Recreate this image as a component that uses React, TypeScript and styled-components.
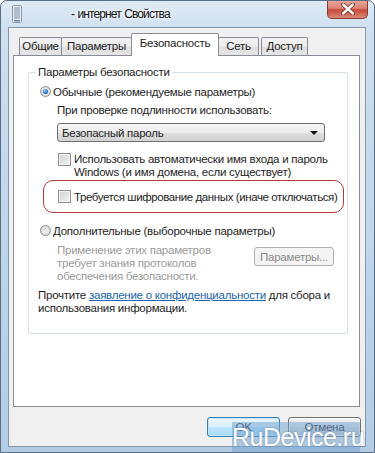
import React from 'react';
import styled, { createGlobalStyle } from 'styled-components';

const GlobalStyle = createGlobalStyle`
  html, body {
    margin: 0;
    padding: 0;
    background: #ffffff;
  }
  body {
    font-family: "Liberation Sans", Arial, sans-serif;
    font-size: 11.5px;
    letter-spacing: -0.25px;
    color: #1e1e1e;
  }
`;

// outer aero frame
const Window = styled.div`
  position: relative;
  width: 375px;
  height: 453px;
  box-sizing: border-box;
  display: flex;
  flex-direction: column;
  border: 1px solid #5b6f84;
  border-radius: 7px 7px 0 0;
  overflow: hidden;
  background: linear-gradient(180deg, #dfebf6 0%, #cfe0f0 26px, #bed5ea 55%, #b3cde5 100%);
`;

const TitleBar = styled.div`
  height: 26px;
  display: flex;
  align-items: center;
  padding: 0 6px 0 11px;
  flex-shrink: 0;
`;

const Title = styled.div`
  margin-left: 49px;
  font-size: 12px;
  letter-spacing: -0.9px;
  word-spacing: 1px;
  color: #111;
  text-shadow: 0 0 6px #ffffff, 0 0 3px #ffffff;
`;

const CloseButton = styled.div`
  margin-left: auto;
  align-self: flex-start;
  margin-top: -1px;
  width: 41px;
  height: 19px;
  box-sizing: border-box;
  border: 1px solid #8c3b31;
  border-top: none;
  border-radius: 0 0 5px 5px;
  background: linear-gradient(180deg, #e9aaa0 0%, #dc8576 45%, #c64a38 55%, #d98b78 100%);
  display: flex;
  align-items: center;
  justify-content: center;
`;

const Client = styled.div`
  flex: 1;
  margin: 0 8px 5px 7px;
  padding: 5px 5px 0 4px;
  background: #f0f0f0;
  border: 1px solid #8497aa;
  display: flex;
  flex-direction: column;
`;

const TabRow = styled.div`
  position: relative;
  z-index: 1;
  height: 23px;
  margin: 0 0 -1px 6px;
  display: flex;
  align-items: flex-end;
`;

const Tab = styled.div<{ $active?: boolean; $w: number; $gap?: number }>`
  width: ${(p) => p.$w}px;
  margin-left: ${(p) => p.$gap ?? 0}px;
  box-sizing: border-box;
  height: ${(p) => (p.$active ? 23 : 18)}px;
  margin-bottom: ${(p) => (p.$active ? 0 : 1)}px;
  border: 1px solid #898c95;
  border-bottom: none;
  border-radius: 2px 2px 0 0;
  background: ${(p) => (p.$active ? '#ffffff' : 'linear-gradient(180deg, #f3f3f3 0%, #ebebeb 50%, #dedede 51%, #e6e6e6 100%)')};
  display: flex;
  align-items: ${(p) => (p.$active ? 'flex-start' : 'center')};
  padding-top: ${(p) => (p.$active ? 2 : 0)}px;
  justify-content: center;
  line-height: 15px;
  white-space: nowrap;
`;

const Panel = styled.div`
  height: 352px;
  box-sizing: border-box;
  background: #ffffff;
  border: 1px solid #898c95;
  padding: 9px 11px 0 14px;
`;

const GroupBox = styled.fieldset`
  margin: 0;
  min-width: 0;
  border: 1px solid #d5dfe5;
  border-radius: 3px;
  padding: 4px 10px 18px 11px;
`;

const Legend = styled.legend`
  padding: 0 2px;
  margin-left: -4px;
  line-height: 15px;
`;

const OptionRow = styled.div<{ $top?: number }>`
  display: flex;
  align-items: center;
  height: 15px;
  margin-top: ${(p) => p.$top ?? 0}px;
  white-space: nowrap;
`;

const Radio = styled.span<{ $checked?: boolean }>`
  width: 11px;
  height: 11px;
  box-sizing: border-box;
  margin-right: 2px;
  border-radius: 50%;
  border: 1px solid #8e8f8f;
  background: radial-gradient(circle at 50% 50%, #f4f4f4 0%, #dcdcdc 70%, #c9c9c9 100%);
  display: flex;
  align-items: center;
  justify-content: center;
  &::after {
    content: '';
    display: ${(p) => (p.$checked ? 'block' : 'none')};
    width: 5px;
    height: 5px;
    border-radius: 50%;
    background: radial-gradient(circle at 40% 35%, #8fd0ff 0%, #2a78c5 55%, #12407a 100%);
  }
`;

const Caption = styled.div<{ $indent: number; $top: number }>`
  margin: ${(p) => p.$top}px 0 0 ${(p) => p.$indent}px;
  line-height: 15px;
  white-space: nowrap;
`;

const Combo = styled.div`
  margin: 5px 0 0 17px;
  width: 268px;
  height: 19px;
  box-sizing: border-box;
  border: 1px solid #707070;
  border-radius: 3px;
  background: linear-gradient(180deg, #f4f4f4 0%, #ececec 50%, #dfdfdf 51%, #d2d2d2 100%);
  display: flex;
  align-items: center;
  padding: 0 6px 0 4px;
`;

const ComboArrow = styled.span`
  margin-left: auto;
  width: 0;
  height: 0;
  border-left: 4px solid transparent;
  border-right: 4px solid transparent;
  border-top: 4px solid #111;
`;

const CheckRow = styled.div<{ $indent: number; $top: number }>`
  display: flex;
  align-items: flex-start;
  margin: ${(p) => p.$top}px 0 0 ${(p) => p.$indent}px;
  line-height: 13px;
  white-space: nowrap;
`;

const CheckBox = styled.span`
  flex-shrink: 0;
  width: 13px;
  height: 13px;
  box-sizing: border-box;
  margin-right: 3px;
  border: 1px solid #8e8f8f;
  box-shadow: inset 0 0 0 1px #f4f4f4;
  background: linear-gradient(135deg, #cfcfcf 0%, #f4f4f4 100%);
`;

const Highlight = styled.div`
  margin: 1px -7px 0 3px;
  height: 33px;
  box-sizing: border-box;
  border: 1px solid #b23a3a;
  border-radius: 10px;
  padding-left: 14px;
  display: flex;
  align-items: center;
  white-space: nowrap;
  letter-spacing: -0.4px;
`;

const AdvancedBlock = styled.div`
  display: flex;
  justify-content: space-between;
  align-items: flex-start;
  margin: 6px 3px 0 17px;
`;

const DimText = styled.div`
  color: #9b9b9b;
  line-height: 13px;
  white-space: nowrap;
`;

const DisabledButton = styled.div`
  margin-top: 3px;
  width: 80px;
  height: 19px;
  box-sizing: border-box;
  border: 1px solid #adb2b5;
  border-radius: 3px;
  background: #f4f4f4;
  color: #8a8a8a;
  display: flex;
  align-items: center;
  justify-content: center;
`;

const Privacy = styled.div`
  margin: 6px 0 0 -2px;
  line-height: 13px;
  white-space: nowrap;
`;

const Link = styled.a`
  color: #1c64b0;
  text-decoration: underline;
`;

const ButtonRow = styled.div`
  display: flex;
  justify-content: flex-end;
  gap: 8px;
  margin: 10px -1px 0 0;
`;

const DialogButton = styled.div<{ $default?: boolean }>`
  width: 73px;
  height: 20px;
  box-sizing: border-box;
  border: 1px solid ${(p) => (p.$default ? '#3c7fb1' : '#707070')};
  border-radius: 3px;
  background: ${(p) =>
    p.$default
      ? 'linear-gradient(180deg, #eaf6fd 0%, #d9f0fc 50%, #bee6fd 51%, #a7d9f5 100%)'
      : 'linear-gradient(180deg, #f2f2f2 0%, #ebebeb 50%, #dddddd 51%, #cfcfcf 100%)'};
  box-shadow: ${(p) => (p.$default ? 'inset 0 0 0 1px #c4e5f6' : 'inset 0 0 0 1px #fcfcfc')};
  display: flex;
  align-items: center;
  justify-content: center;
`;

const Watermark = styled.div`
  position: absolute;
  right: 14px;
  bottom: 0;
  width: 128px;
  height: 30px;
  background: rgba(120, 165, 210, 0.55);
  color: #ffffff;
  font-size: 25px;
  line-height: 30px;
  text-align: center;
  letter-spacing: -0.5px;
  text-shadow: 0 0 2px rgba(70, 110, 160, 0.6);
`;

const AppIcon = () => (
  <svg width="10" height="18" viewBox="0 0 10 18">
    <rect x="0.5" y="0.5" width="9" height="17" rx="1" fill="#e6edf3" stroke="#8a9bad" />
    {[3, 5, 7, 9, 11, 13].map((y) => (
      <line key={y} x1="2" x2="8" y1={y} y2={y} stroke="#7b8da0" strokeWidth="1" />
    ))}
    <rect x="2" y="15" width="6" height="1.5" fill="#5e87b0" />
  </svg>
);

const CloseGlyph = () => (
  <svg width="14" height="12" viewBox="0 0 14 12">
    <path d="M2 1.5 L12 10.5 M12 1.5 L2 10.5" stroke="#7a2a22" strokeWidth="4" strokeLinecap="round" />
    <path d="M2 1.5 L12 10.5 M12 1.5 L2 10.5" stroke="#ffffff" strokeWidth="2.4" strokeLinecap="round" />
  </svg>
);

export default function App() {
  return (
    <>
      <GlobalStyle />
      <Window>
        <TitleBar>
          <AppIcon />
          <Title>- интернет Свойства</Title>
          <CloseButton>
            <CloseGlyph />
          </CloseButton>
        </TitleBar>
        <Client>
          <TabRow>
            <Tab $w={43}>Общие</Tab>
            <Tab $w={71} $gap={-1}>Параметры</Tab>
            <Tab $w={88} $gap={-1} $active>Безопасность</Tab>
            <Tab $w={41} $gap={-1}>Сеть</Tab>
            <Tab $w={47} $gap={2}>Доступ</Tab>
          </TabRow>
          <Panel>
            <GroupBox>
              <Legend>Параметры безопасности</Legend>
              <OptionRow>
                <Radio $checked />
                Обычные (рекомендуемые параметры)
              </OptionRow>
              <Caption $indent={17} $top={4}>При проверке подлинности использовать:</Caption>
              <Combo>
                Безопасный пароль
                <ComboArrow />
              </Combo>
              <CheckRow $indent={18} $top={11}>
                <CheckBox />
                <div>
                  Использовать автоматически имя входа и пароль
                  <br />
                  Windows (и имя домена, если существует)
                </div>
              </CheckRow>
              <Highlight>
                <CheckBox />
                Требуется шифрование данных (иначе отключаться)
              </Highlight>
              <OptionRow $top={10}>
                <Radio />
                Дополнительные (выборочные параметры)
              </OptionRow>
              <AdvancedBlock>
                <DimText>
                  Применение этих параметров
                  <br />
                  требует знания протоколов
                  <br />
                  обеспечения безопасности.
                </DimText>
                <DisabledButton>Параметры...</DisabledButton>
              </AdvancedBlock>
              <Privacy>
                Прочтите <Link>заявление о конфиденциальности</Link> для сбора и
                <br />
                использования информации.
              </Privacy>
            </GroupBox>
          </Panel>
          <ButtonRow>
            <DialogButton $default>OK</DialogButton>
            <DialogButton>Отмена</DialogButton>
          </ButtonRow>
        </Client>
        <Watermark>RuDevice.ru</Watermark>
      </Window>
    </>
  );
}
